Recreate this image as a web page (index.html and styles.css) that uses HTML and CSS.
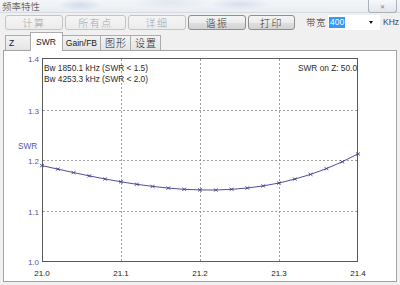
FILE: index.html
```html
<!DOCTYPE html>
<html lang="zh-CN">
<head>
    <meta charset="UTF-8">
    <title>频率特性</title>
    <link rel="stylesheet" href="styles.css">
</head>
<body>
    <div class="titlebar">
        <span class="title">频率特性</span>
        <span class="close-btn">✕</span>
    </div>

    <div class="toolbar">
        <button class="tool-btn" disabled>计算</button>
        <button class="tool-btn btn-all" disabled>所有点</button>
        <button class="tool-btn" disabled>详细</button>
        <button class="tool-btn">谐振</button>
        <button class="tool-btn btn-print">打印</button>
        <span class="bw-label">带宽</span>
        <div class="combo">
            <span class="combo-value">400</span>
            <span class="combo-arrow"></span>
        </div>
        <span class="unit">KHz</span>
    </div>

    <div class="tabs">
        <div class="tab tab-z">Z</div>
        <div class="tab active">SWR</div>
        <div class="tab">Gain/FB</div>
        <div class="tab cjk">图形</div>
        <div class="tab cjk">设置</div>
    </div>

    <div class="panel">
        <svg class="chart" width="392" height="230" viewBox="4 51 392 230">
            <defs>
                <marker id="cross" markerWidth="6" markerHeight="5" refX="3" refY="2.5"
                        markerUnits="userSpaceOnUse" viewBox="0 0 6 5">
                    <path d="M1 1L5 4M1 4L5 1" stroke="#3b3b8c" stroke-width="0.8" fill="none"/>
                </marker>
            </defs>

            <!-- grid -->
            <g class="grid">
                <line x1="121.5" y1="59" x2="121.5" y2="261"/>
                <line x1="200.5" y1="59" x2="200.5" y2="261"/>
                <line x1="279.5" y1="59" x2="279.5" y2="261"/>
                <line x1="43" y1="110.5" x2="357" y2="110.5"/>
                <line x1="43" y1="160.5" x2="357" y2="160.5"/>
                <line x1="43" y1="211.5" x2="357" y2="211.5"/>
            </g>
            <rect class="frame" x="42.5" y="58.5" width="315" height="203"/>

            <!-- y axis -->
            <text class="ylabel" x="39" y="61.5">1.4</text>
            <text class="ylabel" x="39" y="113.5">1.3</text>
            <text class="ylabel" x="39" y="163.5">1.2</text>
            <text class="ylabel" x="39" y="214.5">1.1</text>
            <text class="ylabel" x="39" y="265">1.0</text>
            <text class="yname" x="18" y="148.5">SWR</text>

            <!-- x axis -->
            <text class="xlabel" x="42" y="275.5">21.0</text>
            <text class="xlabel" x="121" y="275.5">21.1</text>
            <text class="xlabel" x="200" y="275.5">21.2</text>
            <text class="xlabel" x="279" y="275.5">21.3</text>
            <text class="xlabel" x="358" y="275.5">21.4</text>

            <!-- notes -->
            <text class="note" x="44" y="71">Bw 1850.1 kHz (SWR &lt; 1.5)</text>
            <text class="note" x="44" y="82">Bw 4253.3 kHz (SWR &lt; 2.0)</text>
            <text class="note note-right" x="357" y="71">SWR on Z: 50.0</text>

            <!-- swr curve -->
            <polyline class="curve"
                points="42,165.6 57.8,169.1 73.6,172.6 89.4,175.9 105.2,179 121,181.8 136.8,184.3 152.6,186.4 168.4,188.1 184.2,189.3 200,189.9 215.8,190 231.6,189.3 247.4,188 263.2,185.9 279,183 294.8,179.1 310.6,174.4 326.4,168.6 342.2,161.8 358,153.9"/>
        </svg>
    </div>
</body>
</html>
```

FILE: styles.css
```css
* {
    margin: 0;
    padding: 0;
    box-sizing: border-box;
}

body {
    width: 400px;
    height: 285px;
    overflow: hidden;
    background: #f0f0f0;
    font-family: 'Liberation Sans', 'Noto Sans CJK SC', sans-serif;
    font-size: 8.5px;
    color: #222;
}

/* window caption */
.titlebar {
    height: 13px;
    display: flex;
    justify-content: space-between;
    align-items: flex-start;
    background:
        radial-gradient(ellipse 22px 6px at 80px 5px, rgba(150,175,215,0.35), transparent),
        radial-gradient(ellipse 30px 6px at 240px 4px, rgba(150,175,215,0.3), transparent),
        radial-gradient(ellipse 40px 7px at 170px 2px, rgba(170,190,220,0.25), transparent),
        linear-gradient(#f4f6f9, #e9edf2);
    border-bottom: 1px solid #d6dbe2;
}

.title {
    font-family: 'Noto Sans CJK SC', sans-serif;
    font-size: 9.5px;
    font-weight: 300;
    line-height: 12px;
    padding-left: 2px;
    color: #333;
}

.close-btn {
    width: 29px;
    height: 13px;
    margin-right: 3px;
    border: 1px solid #a9b1bb;
    border-top: none;
    border-radius: 0 0 3px 3px;
    background: linear-gradient(#f7f8fa, #e2e6eb);
    display: flex;
    align-items: center;
    justify-content: center;
    font-size: 6px;
    color: #7b7f85;
}

/* tool buttons */
.toolbar {
    height: 20px;
    display: flex;
    align-items: flex-start;
    padding: 2px 0 0 5px;
}

.tool-btn {
    width: 58px;
    height: 15px;
    margin-right: 2px;
    border: 1px solid #8f8f8f;
    border-radius: 3px;
    background: linear-gradient(#f4f4f4 0%, #ececec 50%, #dfdfdf 51%, #d3d3d3 100%);
    font-family: 'Noto Sans CJK SC', sans-serif;
    font-size: 10px;
    font-weight: 300;
    line-height: 13px;
    letter-spacing: 1.5px;
    color: #333;
}

.tool-btn:disabled {
    border-color: #c4c4c4;
    background: linear-gradient(#f5f5f5, #ececec);
    color: #a6a6a6;
}

.tool-btn.btn-all {
    width: 61px;
}

.tool-btn.btn-print {
    width: 47px;
}

.bw-label {
    margin-left: 9px;
    font-family: 'Noto Sans CJK SC', sans-serif;
    font-size: 9.5px;
    font-weight: 300;
    line-height: 15px;
    letter-spacing: 0.5px;
    color: #333;
}

.combo {
    width: 52px;
    height: 15px;
    margin-left: 2px;
    background: #fff;
    display: flex;
    align-items: center;
    justify-content: space-between;
    padding: 0 7px 0 1px;
}

.combo-value {
    background: #3399ff;
    color: #fff;
    font-size: 8.5px;
    line-height: 11px;
    padding: 0 1px;
}

.combo-arrow {
    width: 0;
    height: 0;
    border-left: 2.5px solid transparent;
    border-right: 2.5px solid transparent;
    border-top: 3px solid #111;
}

.unit {
    margin-left: 3px;
    line-height: 15px;
    color: #444;
}

/* tab strip */
.tabs {
    height: 17px;
    display: flex;
    align-items: flex-end;
    padding-left: 5px;
}

.tab {
    height: 15px;
    padding: 0 3px;
    margin-right: -1px;
    border: 1px solid #acacac;
    border-bottom: none;
    background: linear-gradient(#f3f3f3, #e4e4e4);
    line-height: 14px;
    color: #1a1a1a;
    text-align: center;
}

.tab.cjk {
    font-family: 'Noto Sans CJK SC', sans-serif;
    font-size: 10px;
    font-weight: 300;
    letter-spacing: 1px;
    padding: 0 3px 0 4px;
}

.tab-z {
    width: 28px;
    text-align: left;
}

.tab.active {
    position: relative;
    z-index: 1;
    height: 19px;
    margin: 0 -1px -1px -2px;
    padding: 0 6px 0 5px;
    background: #fff;
    line-height: 19px;
}

/* plot panel */
.panel {
    height: 232px;
    margin: 0 3px;
    border: 1px solid #a3a3a3;
    background: #fff;
}

.chart {
    display: block;
    font-family: 'Liberation Sans', sans-serif;
}

.grid line {
    stroke: #a0a0a0;
    stroke-width: 1;
    stroke-dasharray: 2 2;
}

.frame {
    fill: none;
    stroke: #5a5a5a;
    stroke-width: 1;
}

.ylabel {
    font-size: 8px;
    fill: #5555a6;
    text-anchor: end;
}

.yname {
    font-size: 8.3px;
    fill: #5555a6;
}

.xlabel {
    font-size: 8px;
    fill: #222;
    text-anchor: middle;
}

.note {
    font-size: 8.3px;
    fill: #2a2a2a;
}

.note-right {
    text-anchor: end;
}

.curve {
    fill: none;
    stroke: #3b3b8c;
    stroke-width: 0.9;
    marker-start: url(#cross);
    marker-mid: url(#cross);
    marker-end: url(#cross);
}
```
